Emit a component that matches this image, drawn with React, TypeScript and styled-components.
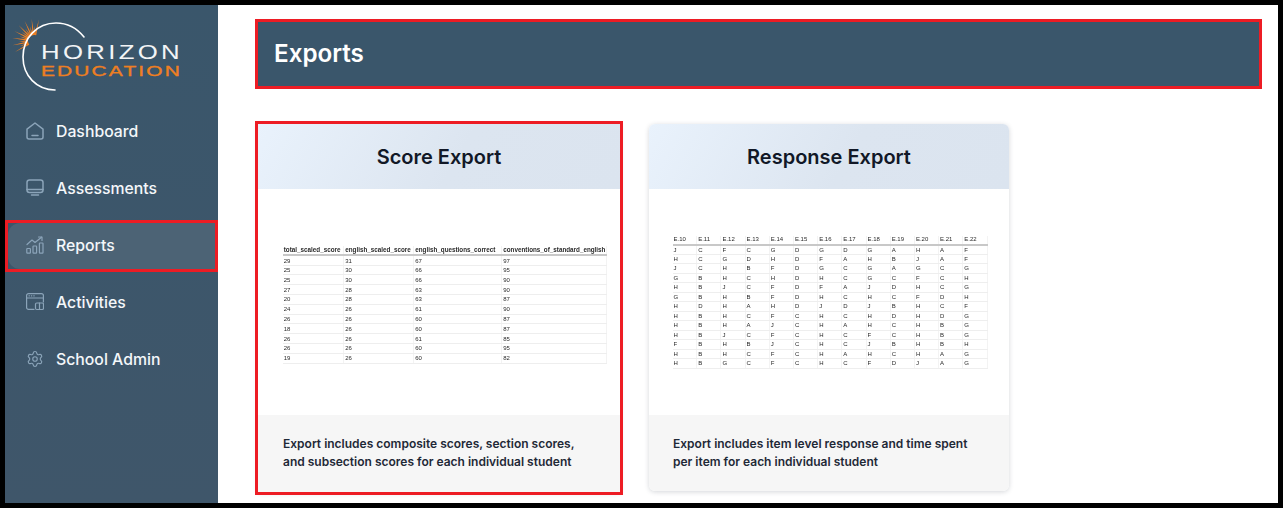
import styled, { createGlobalStyle } from 'styled-components';
import { Settings } from 'lucide-react';
import type { ReactNode } from 'react';

// ─── Data ─────────────────────────────────────────────────────────────────────

const scoreColumns = [
  'total_scaled_score',
  'english_scaled_score',
  'english_questions_correct',
  'conventions_of_standard_english',
];

const scoreRows = [
  ['29', '31', '67', '97'],
  ['25', '30', '66', '95'],
  ['25', '30', '66', '90'],
  ['27', '28', '63', '90'],
  ['20', '28', '63', '87'],
  ['24', '26', '61', '90'],
  ['26', '26', '60', '87'],
  ['18', '26', '60', '87'],
  ['26', '26', '61', '85'],
  ['26', '26', '60', '95'],
  ['19', '26', '60', '82'],
];

const responseColumns = [
  'E.10', 'E.11', 'E.12', 'E.13', 'E.14', 'E.15', 'E.16',
  'E.17', 'E.18', 'E.19', 'E.20', 'E.21', 'E.22',
];

const responseRows = [
  'JCFCGDGDGAHAF',
  'HCGDHDFAHBJAF',
  'JCHBFDGCGAGCG',
  'GBHCHDHCGCFCH',
  'HBJCFDFAJDHCG',
  'GBHBFDHCHCFDH',
  'HDHAHDJDJBHCF',
  'HBHCFCHCHDHDG',
  'HBHAJCHAHCHBG',
  'HBJCFCHCFCHBG',
  'FBHBJCHCJBHBH',
  'HBHCFCHAHCHAG',
  'HBGCFCHCFDJAG',
].map((r) => r.split(''));

// ─── Styled Components ────────────────────────────────────────────────────────

const GlobalStyle = createGlobalStyle`
  html, body {
    margin: 0;
    padding: 0;
    background: #000;
  }
  * {
    box-sizing: border-box;
  }
`;

const Frame = styled.div`
  display: flex;
  width: 1283px;
  height: 508px;
  padding: 5px;
  background: #000;
  overflow: hidden;
  font-family: Inter, 'Liberation Sans', sans-serif;
`;

const Sidebar = styled.aside`
  width: 213px;
  flex-shrink: 0;
  background: linear-gradient(180deg, #3a566b 0%, #3f566a 100%);
`;

const LogoBox = styled.div`
  height: 97px;
`;

const NavList = styled.nav`
  display: flex;
  flex-direction: column;
  gap: 11px;
  padding: 7px 3px 0;
`;

const NavItem = styled.div<{ $active?: boolean }>`
  height: 46px;
  outline: ${({ $active }) => ($active ? '3px solid #ed1c24' : 'none')};
`;

const NavFill = styled.div<{ $active?: boolean }>`
  display: flex;
  align-items: center;
  gap: 12px;
  height: 100%;
  padding: 0 0 2px 18px;
  border-radius: 12px 0 0 12px;
  background: ${({ $active }) => ($active ? '#4c6375' : 'transparent')};
  color: #f4f7fa;
  font-size: 15.8px;
  font-weight: 500;
`;

const IconSvg = styled.svg`
  width: 18px;
  height: 18px;
  flex-shrink: 0;
  fill: none;
  stroke: #8ba4b9;
  stroke-width: 1.5;
  stroke-linecap: round;
  stroke-linejoin: round;
`;

const Main = styled.main`
  flex: 1;
  background: #fff;
  padding: 17px 19px 0 40px;
`;

const PageHeader = styled.header`
  display: flex;
  align-items: center;
  height: 64px;
  padding: 0 0 1px 16px;
  background: #3a566b;
  outline: 3px solid #ed1c24;
`;

const PageTitle = styled.h1`
  margin: 0;
  color: #fff;
  font-size: 24.2px;
  font-weight: 600;
`;

const CardRow = styled.div`
  display: flex;
  align-items: flex-start;
  gap: 29px;
  margin-top: 38px;
`;

const Card = styled.section<{ $marked?: boolean }>`
  display: flex;
  flex-direction: column;
  width: ${({ $marked }) => ($marked ? '362px' : '360px')};
  height: ${({ $marked }) => ($marked ? '368px' : '367px')};
  border-radius: ${({ $marked }) => ($marked ? '0' : '6px')};
  overflow: hidden;
  background: #fff;
  box-shadow: 0 1px 5px rgba(40, 50, 70, 0.2);
  outline: ${({ $marked }) => ($marked ? '3px solid #ed1c24' : 'none')};
`;

const CardHeader = styled.div`
  display: flex;
  align-items: center;
  justify-content: center;
  height: 65px;
  background: linear-gradient(120deg, #e9f2fc 0%, #dce5f0 55%, #dbe4ef 100%);
`;

const CardTitle = styled.h2`
  margin: 0;
  color: #111827;
  font-size: 20px;
  font-weight: 600;
`;

const CardPreview = styled.div<{ $pad: string }>`
  height: 226px;
  display: flex;
  justify-content: center;
  align-items: center;
  padding: ${({ $pad }) => $pad};
`;

const CardFooter = styled.div<{ $left: number }>`
  flex: 1;
  padding: 20px 20px 0 ${({ $left }) => $left}px;
  background: #f6f6f6;
  color: #1f2937;
  font-size: 12px;
  font-weight: 600;
  line-height: 18px;
`;

const Sheet = styled.table<{ $width: number }>`
  width: ${({ $width }) => $width}px;
  flex-shrink: 0;
  border-collapse: collapse;
  table-layout: fixed;
  font-family: 'Liberation Sans', Arial, sans-serif;
  color: #2a2a2a;
  filter: blur(0.3px);
`;

const SheetHead = styled.th<{ $bold?: boolean }>`
  height: 9px;
  padding: 0 0 1px 1px;
  text-align: left;
  font-size: ${({ $bold }) => ($bold ? '6.3px' : '6px')};
  font-weight: ${({ $bold }) => ($bold ? 700 : 400)};
  white-space: nowrap;
  overflow: hidden;
  border-bottom: 2px solid #c8c8c8;
  border-right: 1px solid #f3f3f3;
`;

const SheetCell = styled.td<{ $height: number }>`
  height: ${({ $height }) => $height}px;
  padding: 0 0 0 1px;
  font-size: 6px;
  line-height: 1;
  border-bottom: 1px solid #eeeeee;
  border-right: 1px solid #f3f3f3;
`;

const ColWide = styled.col<{ $width: number }>`
  width: ${({ $width }) => $width}px;
`;

// ─── Drawings ─────────────────────────────────────────────────────────────────

function Logo() {
  const rays = Array.from({ length: 15 }, (_, i) => {
    const deg = 150 + i * 9.5;
    const a = (deg * Math.PI) / 180;
    const len = i % 2 === 0 ? 22 : 15;
    const n = a + Math.PI / 2;
    const cx = 34;
    const cy = 41;
    const bx = cx + Math.cos(a) * 6;
    const by = cy + Math.sin(a) * 6;
    const tip = `${cx + Math.cos(a) * len},${cy + Math.sin(a) * len}`;
    const b1 = `${bx + Math.cos(n) * 0.9},${by + Math.sin(n) * 0.9}`;
    const b2 = `${bx - Math.cos(n) * 0.9},${by - Math.sin(n) * 0.9}`;
    return `${b1} ${tip} ${b2}`;
  });
  return (
    <svg width="213" height="97" viewBox="5 5 213 97" role="img" aria-label="Horizon Education">
      {rays.map((points, i) => (
        <polygon key={i} points={points} fill="#ee7f22" />
      ))}
      <path
        d="M84 37 C76 27 66 23 56 23 C37 23 23 38 23 57 C23 76 37 90 55 90"
        fill="none"
        stroke="#fff"
        strokeWidth="1.6"
        strokeLinecap="round"
      />
      <text
        x="41"
        y="59"
        fontFamily="Liberation Sans, Arial, sans-serif"
        fontSize="19.5"
        fill="#f2f4f6"
        letterSpacing="2.5"
        textLength="142"
        lengthAdjust="spacingAndGlyphs"
      >
        HORIZON
      </text>
      <text
        x="41"
        y="76"
        fontFamily="Liberation Sans, Arial, sans-serif"
        fontSize="14.5"
        fill="#ee7f22"
        stroke="#ee7f22"
        strokeWidth="0.35"
        letterSpacing="1.5"
        textLength="141"
        lengthAdjust="spacingAndGlyphs"
      >
        EDUCATION
      </text>
    </svg>
  );
}

const HomeIcon = () => (
  <IconSvg viewBox="0 0 18 18">
    <path d="M1 7.2 L9 1 L17 7.2 V15 a2 2 0 0 1 -2 2 H3 a2 2 0 0 1 -2 -2 Z" />
    <path d="M6 13.5 H12" />
  </IconSvg>
);

const MonitorIcon = () => (
  <IconSvg viewBox="0 0 18 18">
    <rect x="1" y="1" width="16" height="12.5" rx="2.5" />
    <path d="M1 10.5 H17" />
    <path d="M5.5 16 H12.5" />
  </IconSvg>
);

const ChartIcon = () => (
  <IconSvg viewBox="0 0 18 18" style={{ strokeWidth: 1.2 }}>
    <rect x="0.8" y="12.5" width="3.6" height="4.7" rx="0.6" />
    <rect x="7" y="10" width="3.6" height="7.2" rx="0.6" />
    <rect x="13.4" y="7" width="3.6" height="10.2" rx="0.6" />
    <path d="M1 8.5 L6 4 L9 6.5 L15.5 1.2" />
    <path d="M12.5 1 H16 V4.5" />
  </IconSvg>
);

const ActivityIcon = () => (
  <IconSvg viewBox="0 0 18 18" style={{ strokeWidth: 1.2 }}>
    <path d="M8 16.4 H2.6 a2 2 0 0 1 -2 -2 V2.6 a2 2 0 0 1 2 -2 H15.4 a2 2 0 0 1 2 2 V9" />
    <path d="M0.8 5 H17.2" />
    <path d="M3 2.8 H3.4 M5.4 2.8 H5.8 M7.8 2.8 H8.2" />
    <rect x="9.5" y="10" width="8" height="6.5" rx="1.2" />
    <path d="M13.5 10 V16.5" />
  </IconSvg>
);

function NavEntry({ icon, label, active }: { icon: ReactNode; label: string; active?: boolean }) {
  return (
    <NavItem $active={active}>
      <NavFill $active={active}>
        {icon}
        {label}
      </NavFill>
    </NavItem>
  );
}

// ─── Component ────────────────────────────────────────────────────────────────

export default function App() {
  return (
    <Frame>
      <GlobalStyle />
      <Sidebar>
        <LogoBox>
          <Logo />
        </LogoBox>
        <NavList>
          <NavEntry icon={<HomeIcon />} label="Dashboard" />
          <NavEntry icon={<MonitorIcon />} label="Assessments" />
          <NavEntry icon={<ChartIcon />} label="Reports" active />
          <NavEntry icon={<ActivityIcon />} label="Activities" />
          <NavEntry icon={<Settings size={18} color="#8ba4b9" strokeWidth={1.5} />} label="School Admin" />
        </NavList>
      </Sidebar>

      <Main>
        <PageHeader>
          <PageTitle>Exports</PageTitle>
        </PageHeader>

        <CardRow>
          <Card $marked>
            <CardHeader>
              <CardTitle>Score Export</CardTitle>
            </CardHeader>
            <CardPreview $pad="6px 0 0 12px">
              <Sheet $width={324}>
                <colgroup>
                  <ColWide $width={61} />
                  <ColWide $width={70} />
                  <ColWide $width={88} />
                  <ColWide $width={105} />
                </colgroup>
                <thead>
                  <tr>
                    {scoreColumns.map((c) => (
                      <SheetHead key={c} $bold>{c}</SheetHead>
                    ))}
                  </tr>
                </thead>
                <tbody>
                  {scoreRows.map((row, r) => (
                    <tr key={r}>
                      {row.map((v, c) => (
                        <SheetCell key={c} $height={9.8}>{v}</SheetCell>
                      ))}
                    </tr>
                  ))}
                </tbody>
              </Sheet>
            </CardPreview>
            <CardFooter $left={25}>
              Export includes composite scores, section scores,
              <br />
              and subsection scores for each individual student
            </CardFooter>
          </Card>

          <Card>
            <CardHeader>
              <CardTitle>Response Export</CardTitle>
            </CardHeader>
            <CardPreview $pad="0 0 0 2px">
              <Sheet $width={315}>
                <thead>
                  <tr>
                    {responseColumns.map((c) => (
                      <SheetHead key={c}>{c}</SheetHead>
                    ))}
                  </tr>
                </thead>
                <tbody>
                  {responseRows.map((row, r) => (
                    <tr key={r}>
                      {row.map((v, c) => (
                        <SheetCell key={c} $height={9.5}>{v}</SheetCell>
                      ))}
                    </tr>
                  ))}
                </tbody>
              </Sheet>
            </CardPreview>
            <CardFooter $left={24}>
              Export includes item level response and time spent
              <br />
              per item for each individual student
            </CardFooter>
          </Card>
        </CardRow>
      </Main>
    </Frame>
  );
}
